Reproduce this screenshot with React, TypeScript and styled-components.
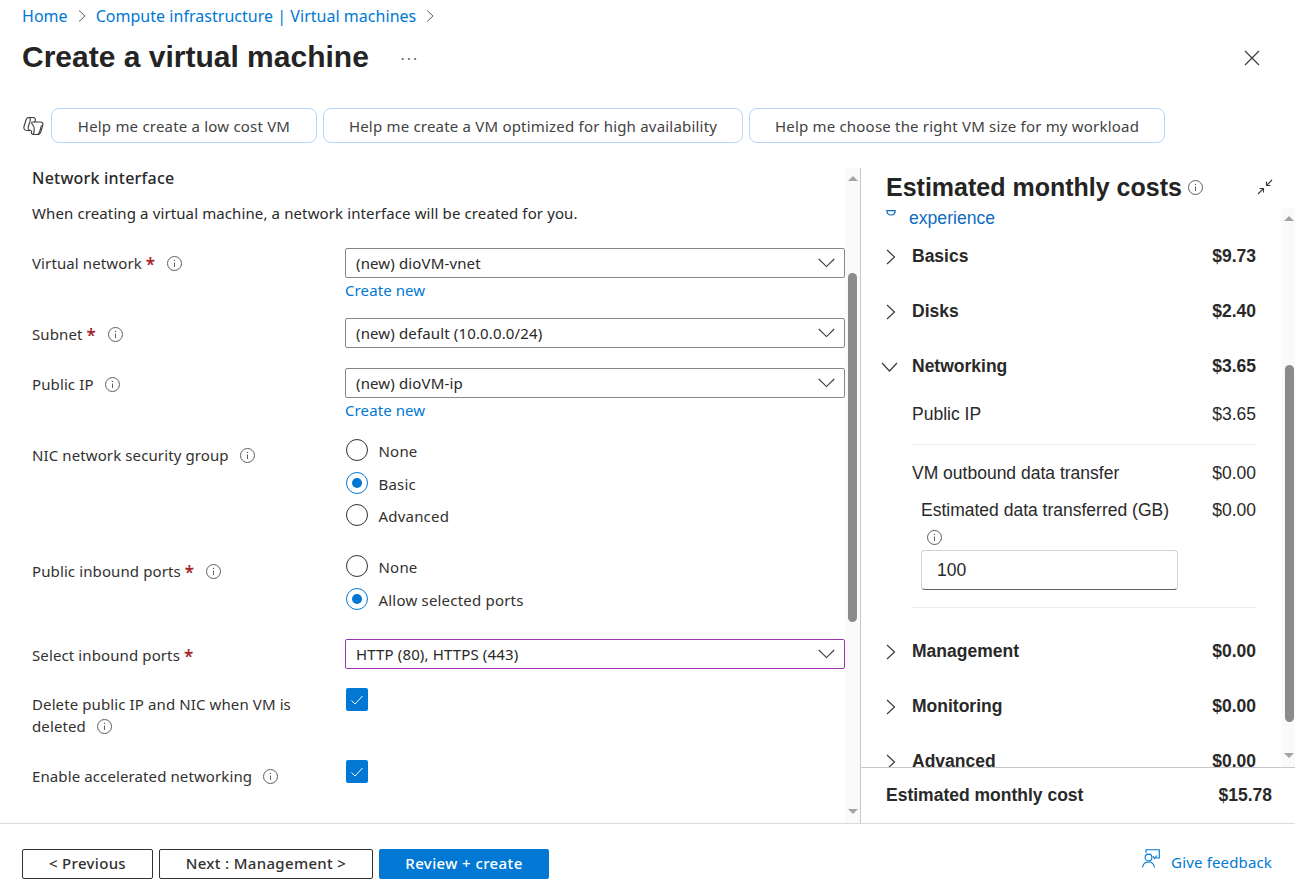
import * as React from 'react';
import styled, { createGlobalStyle } from 'styled-components';

const GlobalStyle = createGlobalStyle`
  html, body {
    margin: 0;
    padding: 0;
    background: #fff;
  }
  * {
    box-sizing: border-box;
  }
`;

const BODY_FONT = `'Noto Sans', 'Open Sans', sans-serif`;
const COST_FONT = `'Liberation Sans', Arial, sans-serif`;

const Page = styled.div`
  width: 1295px;
  height: 883px;
  overflow: hidden;
  display: flex;
  flex-direction: column;
  font-family: ${BODY_FONT};
  color: #292929;
  background: #fff;
`;

// <editor-fold desc="Header">
const Breadcrumbs = styled.nav`
  height: 32px;
  padding-left: 22px;
  display: flex;
  align-items: center;
  font-size: 16px;
  letter-spacing: 0.03px;
  color: #0078d4;
`;

const Crumb = styled.a`
  color: #0078d4;
  text-decoration: none;
  white-space: nowrap;
`;

const CrumbChevron = styled.span`
  display: inline-flex;
  width: 28px;
  justify-content: center;
  color: #605e5c;
`;

const TitleRow = styled.div`
  height: 50px;
  padding: 0 22px;
  display: flex;
  align-items: center;
`;

const Title = styled.h1`
  margin: 0;
  font-family: ${COST_FONT};
  font-size: 30px;
  font-weight: 700;
  color: #242424;
  white-space: nowrap;
`;

const MoreDots = styled.span`
  margin: 2px 0 0 32px;
  font-size: 14px;
  letter-spacing: 2.4px;
  color: #505050;
`;

const CloseButton = styled.span`
  margin: 2px 13px 0 auto;
  display: inline-flex;
  color: #3b3b3b;
`;

const PromptRow = styled.div`
  margin-top: 26px;
  height: 35px;
  padding-left: 22px;
  display: flex;
  align-items: center;
`;

const CopilotMark = styled.span`
  display: inline-flex;
  width: 28px;
  margin-left: 1px;
  color: #3b3b3b;
`;

const PromptButton = styled.button<{ $width: number }>`
  width: ${(p) => p.$width}px;
  height: 35px;
  padding: 0;
  margin-right: 6px;
  background: #fff;
  border: 1px solid #b4d6fa;
  border-radius: 8px;
  font-family: ${BODY_FONT};
  font-size: 15px;
  letter-spacing: 0.2px;
  color: #424242;
  white-space: nowrap;
`;
// </editor-fold>

// <editor-fold desc="Panels">
const Main = styled.div`
  margin-top: 25px;
  height: 656px;
  display: flex;
  border-bottom: 1px solid #dcdcdc;
`;

const FormPanel = styled.section`
  width: 861px;
  display: flex;
  border-right: 1px solid #c8c8c8;
`;

const FormScroll = styled.div`
  width: 845px;
  padding-left: 32px;
  overflow: hidden;
`;

const Track = styled.div<{ $width: number }>`
  width: ${(p) => p.$width}px;
  flex: none;
  background: #fafafa;
  position: relative;
`;

const Thumb = styled.div<{ $top: number; $height: number; $right: number }>`
  position: absolute;
  top: ${(p) => p.$top}px;
  right: ${(p) => p.$right}px;
  width: 9px;
  height: ${(p) => p.$height}px;
  border-radius: 5px;
  background: #8b8b8b;
`;

const ArrowUp = styled.div<{ $top: number }>`
  position: absolute;
  top: ${(p) => p.$top}px;
  left: 50%;
  margin-left: -5px;
  border-left: 5px solid transparent;
  border-right: 5px solid transparent;
  border-bottom: 5px solid #a3a3a3;
`;

const ArrowDown = styled.div<{ $bottom: number }>`
  position: absolute;
  bottom: ${(p) => p.$bottom}px;
  left: 50%;
  margin-left: -5px;
  border-left: 5px solid transparent;
  border-right: 5px solid transparent;
  border-top: 5px solid #a3a3a3;
`;

const SectionHeading = styled.h2`
  margin: 0;
  height: 20px;
  line-height: 20px;
  font-size: 16px;
  font-weight: 500;
  letter-spacing: 0.22px;
  color: #292929;
`;

const Description = styled.p`
  margin: 15px 0 0;
  height: 20px;
  line-height: 20px;
  font-size: 15px;
  letter-spacing: 0.115px;
  color: #292929;
`;

const FormRow = styled.div<{ $top: number }>`
  margin-top: ${(p) => p.$top}px;
  display: grid;
  grid-template-columns: 313px 500px;
`;

const Label = styled.label<{ $pad: number; $width?: number }>`
  display: block;
  padding-top: ${(p) => p.$pad}px;
  width: ${(p) => (p.$width ? `${p.$width}px` : 'auto')};
  font-size: 15px;
  line-height: 22px;
  letter-spacing: 0.11px;
  color: #323130;
`;

const Required = styled.span`
  color: #a4262c;
  margin-left: 4px;
  font-size: 17px;
  font-weight: 600;
  line-height: 0;
  vertical-align: -2px;
`;

const InfoWrap = styled.span<{ $left?: number }>`
  display: inline-flex;
  vertical-align: -2px;
  margin-left: ${(p) => p.$left ?? 11}px;
  color: #605e5c;
`;

const Select = styled.div<{ $focused?: boolean }>`
  height: 30px;
  padding: 0 9px 0 10px;
  display: flex;
  align-items: center;
  justify-content: space-between;
  font-size: 15px;
  letter-spacing: 0.14px;
  color: #292929;
  border: 1px solid ${(p) => (p.$focused ? '#9c34b4' : '#8a8886')};
  border-radius: 2px;
  background: #fff;
`;

const CreateNew = styled.a`
  display: block;
  margin-top: 1px;
  height: 22px;
  line-height: 22px;
  font-size: 15px;
  letter-spacing: 0.1px;
  color: #0078d4;
`;

const RadioGroup = styled.div<{ $gap: number }>`
  display: flex;
  flex-direction: column;
  gap: ${(p) => p.$gap}px;
`;

const RadioRow = styled.div`
  height: 22px;
  display: flex;
  align-items: center;
  font-size: 15px;
  letter-spacing: 0.2px;
  color: #323130;
`;

const RadioCircle = styled.span<{ $checked?: boolean }>`
  width: 22px;
  height: 22px;
  margin: 0 10.5px 2px 1px;
  border-radius: 50%;
  border: 1px solid ${(p) => (p.$checked ? '#0078d4' : '#323130')};
  display: flex;
  align-items: center;
  justify-content: center;

  &::after {
    content: '';
    display: ${(p) => (p.$checked ? 'block' : 'none')};
    width: 10px;
    height: 10px;
    border-radius: 50%;
    background: #0078d4;
  }
`;

const CheckBox = styled.span`
  width: 22px;
  height: 23px;
  margin-left: 1px;
  border-radius: 2px;
  background: #0078d4;
  display: flex;
  align-items: center;
  justify-content: center;
  color: #fff;
`;
// </editor-fold>

// <editor-fold desc="Cost panel">
const CostPanel = styled.aside`
  flex: 1;
  min-width: 0;
  display: flex;
  flex-direction: column;
`;

const CostHeader = styled.div`
  height: 40px;
  padding: 0 22px 2px 25px;
  display: flex;
  align-items: center;
`;

const CostTitle = styled.h2`
  margin: 0;
  font-family: ${COST_FONT};
  font-size: 25px;
  font-weight: 700;
  color: #242424;
  white-space: nowrap;
`;

const CollapseIcon = styled.span`
  margin-left: auto;
  display: inline-flex;
  color: #3b3b3b;
`;

const CostBody = styled.div`
  flex: 1;
  min-height: 0;
  display: flex;
`;

const CostScroll = styled.div`
  flex: 1;
  min-width: 0;
  padding: 0 26px 0 25px;
  overflow: hidden;
  font-family: ${COST_FONT};
`;

const ExperienceLink = styled.div`
  height: 20px;
  display: flex;
  align-items: center;
  font-size: 17.6px;
  color: #0f6cbd;
`;

const ClippedGlyph = styled.span`
  width: 23px;
  align-self: flex-start;
  margin-top: 2px;
  display: inline-flex;
`;

const CostRow = styled.div<{ $top: number }>`
  margin-top: ${(p) => p.$top}px;
  height: 22px;
  display: flex;
  align-items: center;
  font-size: 17.5px;
  font-weight: 700;
  color: #292929;
`;

const CostChevron = styled.span`
  width: 26px;
  margin-top: 2px;
  display: inline-flex;
  color: #3b3b3b;
`;

const Amount = styled.span`
  margin-left: auto;
`;

const SubRow = styled.div<{ $top: number; $indent?: number }>`
  margin-top: ${(p) => p.$top}px;
  margin-left: ${(p) => p.$indent ?? 26}px;
  height: 22px;
  display: flex;
  align-items: center;
  font-size: 17.5px;
  color: #292929;
`;

const Divider = styled.hr<{ $top: number }>`
  margin: ${(p) => p.$top}px 0 0 26px;
  border: 0;
  border-top: 1px solid #ebebeb;
`;

const SmallInfo = styled.div`
  margin: 9px 0 0 41px;
  height: 15px;
  display: flex;
  color: #605e5c;
`;

const NumberBox = styled.div`
  margin: 5px 0 0 35px;
  width: 257px;
  height: 40px;
  padding-left: 15px;
  display: flex;
  align-items: center;
  font-size: 17.5px;
  color: #292929;
  border: 1px solid #d1d1d1;
  border-bottom-color: #616161;
  border-radius: 4px;
`;

const CostFooter = styled.div`
  height: 56px;
  padding: 0 23px 0 25px;
  display: flex;
  align-items: center;
  border-top: 1px solid #c8c8c8;
  font-family: ${COST_FONT};
  font-size: 17.5px;
  font-weight: 700;
  color: #292929;
`;
// </editor-fold>

// <editor-fold desc="Footer">
const Footer = styled.footer`
  flex: 1;
  padding: 25px 23px 4px 22px;
  display: flex;
  align-items: center;
`;

const OutlineButton = styled.button<{ $width: number }>`
  width: ${(p) => p.$width}px;
  height: 30px;
  margin-right: 6px;
  padding: 0 0 2px;
  background: #fff;
  border: 1px solid #323130;
  border-radius: 2px;
  font-family: ${BODY_FONT};
  font-size: 15px;
  font-weight: 500;
  letter-spacing: 0.32px;
  color: #323130;
`;

const PrimaryButton = styled.button`
  width: 170px;
  height: 30px;
  padding: 0 0 2px;
  background: #0078d4;
  border: 0;
  border-radius: 2px;
  font-family: ${BODY_FONT};
  font-size: 15px;
  font-weight: 500;
  letter-spacing: 0.4px;
  color: #fff;
`;

const Feedback = styled.a`
  margin: -4px 0 0 auto;
  display: flex;
  align-items: center;
  font-size: 15px;
  letter-spacing: 0.15px;
  color: #0078d4;
`;

const FeedbackIcon = styled.span`
  display: inline-flex;
  margin: -7px 11px 0 0;
`;
// </editor-fold>

const Chevron = ({ size = 14 }: { size?: number }) => (
  <svg width={size} height={size} viewBox="0 0 14 14" fill="none" stroke="currentColor" strokeWidth="1">
    <path d="M4 1.5 L10 7 L4 12.5" />
  </svg>
);

const CostChevronRight = () => (
  <svg width="11" height="16" viewBox="0 0 11 16" fill="none" stroke="currentColor" strokeWidth="1.2">
    <path d="M1 1 L8.5 8 L1 15" />
  </svg>
);

const CostChevronDown = () => (
  <svg width="17" height="12" viewBox="0 0 17 12" fill="none" stroke="currentColor" strokeWidth="1.2" style={{ marginLeft: -5 }}>
    <path d="M1 2 L8.5 10 L16 2" />
  </svg>
);

const SelectChevron = () => (
  <svg width="17" height="10" viewBox="0 0 17 10" fill="none" stroke="#3b3b3b" strokeWidth="1.1">
    <path d="M0.8 1 L8.5 8.6 L16.2 1" />
  </svg>
);

const InfoIcon = () => (
  <svg width="15" height="15" viewBox="0 0 15 15" fill="none" stroke="currentColor">
    <circle cx="7.5" cy="7.5" r="7" strokeWidth="1" />
    <path d="M7.5 6.5 V11" strokeWidth="1" />
    <circle cx="7.5" cy="4.4" r="0.7" fill="currentColor" stroke="none" />
  </svg>
);

const CheckMark = () => (
  <svg width="14" height="12" viewBox="0 0 14 12" fill="none" stroke="currentColor" strokeWidth="1">
    <path d="M1.5 6.5 L5 10 L12.5 2" />
  </svg>
);

const Radio = ({ label, checked }: { label: string; checked?: boolean }) => (
  <RadioRow>
    <RadioCircle $checked={checked} />
    {label}
  </RadioRow>
);

const FormSelect = ({ value, focused }: { value: string; focused?: boolean }) => (
  <Select $focused={focused}>
    {value}
    <SelectChevron />
  </Select>
);

const Info = ({ left }: { left?: number }) => (
  <InfoWrap $left={left}>
    <InfoIcon />
  </InfoWrap>
);

const CostLine = ({ name, amount, top, open }: { name: string; amount: string; top: number; open?: boolean }) => (
  <CostRow $top={top}>
    <CostChevron>{open ? <CostChevronDown /> : <CostChevronRight />}</CostChevron>
    {name}
    <Amount>{amount}</Amount>
  </CostRow>
);

export default function App() {
  return (
    <Page>
      <GlobalStyle />
      <Breadcrumbs>
        <Crumb>Home</Crumb>
        <CrumbChevron>
          <Chevron />
        </CrumbChevron>
        <Crumb>Compute infrastructure | Virtual machines</Crumb>
        <CrumbChevron>
          <Chevron />
        </CrumbChevron>
      </Breadcrumbs>
      <TitleRow>
        <Title>Create a virtual machine</Title>
        <MoreDots>···</MoreDots>
        <CloseButton>
          <svg width="16" height="16" viewBox="0 0 16 16" fill="none" stroke="currentColor" strokeWidth="1.2">
            <path d="M1 1 L15 15 M15 1 L1 15" />
          </svg>
        </CloseButton>
      </TitleRow>
      <PromptRow>
        <CopilotMark>
          <svg width="21" height="20" viewBox="0 0 21 20" fill="none" stroke="currentColor" strokeWidth="1.1">
            <path d="M5.5 1.5 H10 C12 1.5 12.8 3 12.3 4.5 L11.6 6.2" />
            <path d="M5.5 1.5 C4.3 1.5 3.7 2.2 3.2 3.5 L1 10.5 C0.4 12.5 1.5 14.5 4 14.5 H8" />
            <path d="M5.5 1.5 C7.5 1.5 7.5 3.5 7 5.5 L5.2 11 C4.7 13 6 14.5 8 14.5" />
            <path d="M9.5 6 H17.5 C19.3 6 20.3 7.3 19.8 9 L17.8 15.8 C17.2 17.6 16 18.5 14.5 18.5 H10.5 C8.8 18.5 8 17.2 8.5 15.5 L8.8 14.5" />
            <path d="M9.5 6 C7.8 6 9.2 8.5 10.5 10 C11.5 11.5 11.5 14 10.5 18.3" />
            <path d="M14.5 18.5 C16 18.5 16.4 16.5 17 14.5 L18.5 9.5" />
          </svg>
        </CopilotMark>
        <PromptButton $width={266}>Help me create a low cost VM</PromptButton>
        <PromptButton $width={420}>Help me create a VM optimized for high availability</PromptButton>
        <PromptButton $width={416}>Help me choose the right VM size for my workload</PromptButton>
      </PromptRow>
      <Main>
        <FormPanel>
          <FormScroll>
            <SectionHeading>Network interface</SectionHeading>
            <Description>When creating a virtual machine, a network interface will be created for you.</Description>
            <FormRow $top={25}>
              <Label $pad={4}>
                Virtual network<Required>*</Required>
                <Info left={12} />
              </Label>
              <div>
                <FormSelect value="(new) dioVM-vnet" />
                <CreateNew>Create new</CreateNew>
              </div>
            </FormRow>
            <FormRow $top={17}>
              <Label $pad={5}>
                Subnet<Required>*</Required>
                <Info left={12} />
              </Label>
              <FormSelect value="(new) default (10.0.0.0/24)" />
            </FormRow>
            <FormRow $top={20}>
              <Label $pad={5}>
                Public IP
                <Info />
              </Label>
              <div>
                <FormSelect value="(new) dioVM-ip" />
                <CreateNew>Create new</CreateNew>
              </div>
            </FormRow>
            <FormRow $top={19}>
              <Label $pad={4}>
                NIC network security group
                <Info />
              </Label>
              <RadioGroup $gap={10.5}>
                <Radio label="None" />
                <Radio label="Basic" checked />
                <Radio label="Advanced" />
              </RadioGroup>
            </FormRow>
            <FormRow $top={29}>
              <Label $pad={4}>
                Public inbound ports<Required>*</Required>
                <Info left={12} />
              </Label>
              <RadioGroup $gap={11}>
                <Radio label="None" />
                <Radio label="Allow selected ports" checked />
              </RadioGroup>
            </FormRow>
            <FormRow $top={28}>
              <Label $pad={5}>
                Select inbound ports<Required>*</Required>
              </Label>
              <FormSelect value="HTTP (80), HTTPS (443)" focused />
            </FormRow>
            <FormRow $top={19}>
              <Label $pad={5} $width={285}>
                Delete public IP and NIC when VM is deleted
                <Info />
              </Label>
              <CheckBox>
                <CheckMark />
              </CheckBox>
            </FormRow>
            <FormRow $top={23}>
              <Label $pad={5}>
                Enable accelerated networking
                <Info />
              </Label>
              <CheckBox>
                <CheckMark />
              </CheckBox>
            </FormRow>
          </FormScroll>
          <Track $width={15}>
            <ArrowUp $top={8} />
            <Thumb $top={105} $height={349} $right={3} />
            <ArrowDown $bottom={9} />
          </Track>
        </FormPanel>
        <CostPanel>
          <CostHeader>
            <CostTitle>Estimated monthly costs</CostTitle>
            <Info left={6} />
            <CollapseIcon>
              <svg width="16" height="16" viewBox="0 0 16 16" fill="none" stroke="currentColor" strokeWidth="1.1">
                <path d="M15 1 L9.5 6.5 M9.5 2.5 V6.5 H13.5 M1 15 L6.5 9.5 M2.5 9.5 H6.5 V13.5" />
              </svg>
            </CollapseIcon>
          </CostHeader>
          <CostBody>
            <CostScroll>
              <ExperienceLink>
                <ClippedGlyph>
                  <svg width="10" height="6" viewBox="0 0 10 6" fill="none" stroke="#0f6cbd" strokeWidth="1.2">
                    <path d="M0.8 0.6 H9.2 C9.2 3.4 7.5 5 5 5 C2.5 5 0.8 3.4 0.8 0.6 Z" />
                  </svg>
                </ClippedGlyph>
                experience
              </ExperienceLink>
              <CostLine name="Basics" amount="$9.73" top={17} />
              <CostLine name="Disks" amount="$2.40" top={33} />
              <CostLine name="Networking" amount="$3.65" top={33} open />
              <SubRow $top={26}>
                Public IP
                <Amount>$3.65</Amount>
              </SubRow>
              <Divider $top={19} />
              <SubRow $top={17}>
                VM outbound data transfer
                <Amount>$0.00</Amount>
              </SubRow>
              <SubRow $top={15} $indent={35}>
                Estimated data transferred (GB)
                <Amount>$0.00</Amount>
              </SubRow>
              <SmallInfo>
                <InfoIcon />
              </SmallInfo>
              <NumberBox>100</NumberBox>
              <Divider $top={17} />
              <CostLine name="Management" amount="$0.00" top={32} />
              <CostLine name="Monitoring" amount="$0.00" top={33} />
              <CostLine name="Advanced" amount="$0.00" top={33} />
            </CostScroll>
            <Track $width={13}>
              <ArrowUp $top={8} />
              <Thumb $top={157} $height={357} $right={1} />
              <ArrowDown $bottom={9} />
            </Track>
          </CostBody>
          <CostFooter>
            Estimated monthly cost
            <Amount>$15.78</Amount>
          </CostFooter>
        </CostPanel>
      </Main>
      <Footer>
        <OutlineButton $width={131}>&lt; Previous</OutlineButton>
        <OutlineButton $width={214}>Next : Management &gt;</OutlineButton>
        <PrimaryButton>Review + create</PrimaryButton>
        <Feedback>
          <FeedbackIcon>
            <svg width="18" height="19" viewBox="0 0 18 19" fill="none" stroke="#0078d4" strokeWidth="1.1">
              <path d="M4 4 V0.7 H17.3 V9 H13.5" />
              <circle cx="6.5" cy="8.5" r="3.4" />
              <path d="M0.6 18.5 C1 15 3 13 6.5 13 C10 13 12 15 12.4 18.5" />
              <path d="M11 7 L12.5 9.5 L15 6.5" />
            </svg>
          </FeedbackIcon>
          Give feedback
        </Feedback>
      </Footer>
    </Page>
  );
}
